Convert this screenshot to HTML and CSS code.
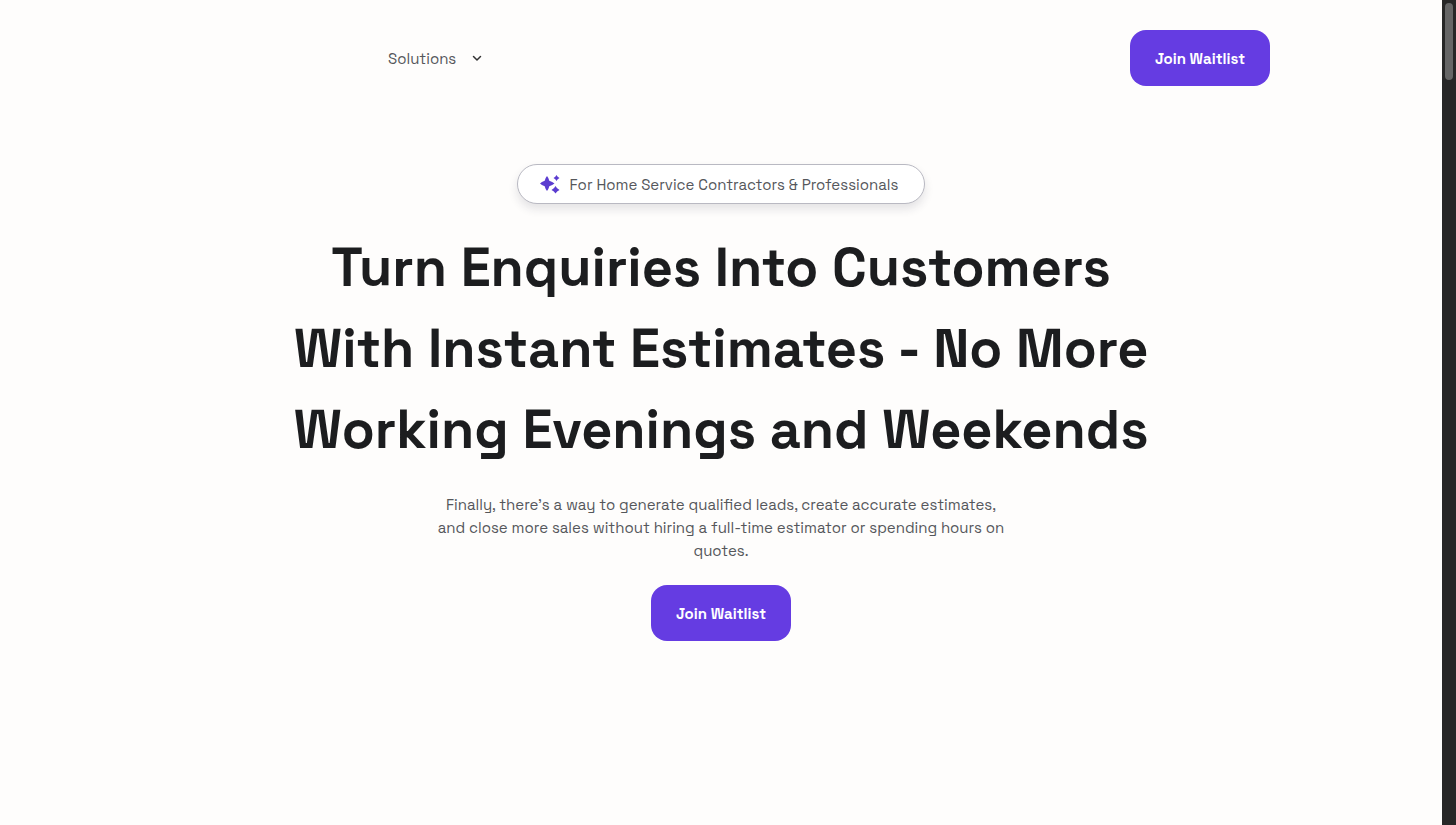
FILE: index.html
```html
<!DOCTYPE html>
<html lang="en">

<head>
	<meta charset="UTF-8">
	<meta name="viewport" content="width=device-width, initial-scale=1">
	<title>Join Waitlist</title>
	<link rel="stylesheet" href="styles.css">
</head>

<body>
	<div class="page">
		<header class="header">
			<nav class="nav">
				<button type="button" class="nav-item">
					Solutions
					<svg class="chevron" viewBox="0 0 10 10" aria-hidden="true">
						<path d="M1.5 3.5 L5 7 L8.5 3.5" />
					</svg>
				</button>
			</nav>
			<button type="button" class="btn">Join Waitlist</button>
		</header>

		<main class="hero">
			<div class="badge">
				<svg class="sparkles" viewBox="0 0 20 20" aria-hidden="true">
					<path d="M7 2 Q8.500 3.500 9.300 6.800 Q12.500 7.800 14.500 9.500 Q12.500 11.200 9.300 12.200 Q8.500 15.500 7 17 Q5.500 15.500 4.700 12.200 Q1.500 11.200 0 9.500 Q1.500 7.800 4.700 6.800 Q5.500 3.500 7 2 Z" />
					<path d="M16.500 1 Q17.400 3.200 19.500 4 Q17.400 4.800 16.500 7 Q15.600 4.800 13.500 4 Q15.600 3.200 16.500 1 Z" />
					<path d="M15.500 12 Q16.800 14.700 19.500 16 Q16.800 17.300 15.500 19.500 Q14.200 17.300 11.500 16 Q14.200 14.700 15.500 12 Z" />
				</svg>
				<span>For Home Service Contractors &amp; Professionals</span>
			</div>
			<h1 class="title">Turn Enquiries Into Customers<br>With Instant Estimates - No More<br>Working Evenings and Weekends</h1>
			<p class="lead">Finally, there’s a way to generate qualified leads, create accurate estimates,<br>and close more sales without hiring a full-time estimator or spending hours on<br>quotes.</p>
			<button type="button" class="btn">Join Waitlist</button>
		</main>
	</div>

	<!-- scroll track -->
	<div class="track" aria-hidden="true">
		<div class="thumb"></div>
	</div>
</body>

</html>
```
FILE: styles.css
```css
* {
	box-sizing: border-box;
}

body {
	display: flex;
	min-height: 100vh;
	margin: 0;
	background: #fefdfc;
	color: #55575b;
	font-family: "Space Grotesk", Inter, "Liberation Sans", sans-serif;
	font-size: 15px;
	line-height: 23px;
}

button {
	border: 0;
	font: inherit;
	cursor: pointer;
}

.page {
	flex: 1;
	min-width: 0;
	padding: 0 24px;
}

.header {
	display: flex;
	align-items: center;
	justify-content: space-between;
	max-width: 1098px;
	margin: 0 auto;
	padding: 30px 0;
}

.nav {
	padding-left: 216px;
}

.nav-item {
	display: flex;
	align-items: center;
	gap: 16px;
	padding: 0;
	background: none;
	color: inherit;
}

.chevron {
	width: 10px;
	height: 10px;
	fill: none;
	stroke: #333;
	stroke-width: 1.5;
	stroke-linecap: round;
	stroke-linejoin: round;
}

.btn {
	height: 56px;
	padding: 0 25px;
	border-radius: 16px;
	background: #653ce2;
	color: #fff;
	font-weight: 600;
}

.hero {
	display: flex;
	flex-direction: column;
	align-items: center;
	padding: 48px 0;
	text-align: center;
}

.badge {
	display: flex;
	align-items: center;
	gap: 10px;
	height: 40px;
	padding: 0 26px 0 22px;
	border: 1px solid #b9b9c2;
	border-radius: 20px;
	background: #fff;
	box-shadow: 0 5px 10px rgba(30, 30, 60, .12);
}

.sparkles {
	width: 20px;
	height: 20px;
	fill: #5b3cd0;
}

.title {
	margin: 23px 0;
	color: #1c1d1f;
	font-size: 54px;
	font-weight: 700;
	line-height: 81px;
}

.lead {
	margin: 0 0 23px;
}

.track {
	width: 14px;
	padding: 3px;
	background: #272727;
}

.thumb {
	height: 77px;
	border-radius: 4px;
	background: #666;
}
```
